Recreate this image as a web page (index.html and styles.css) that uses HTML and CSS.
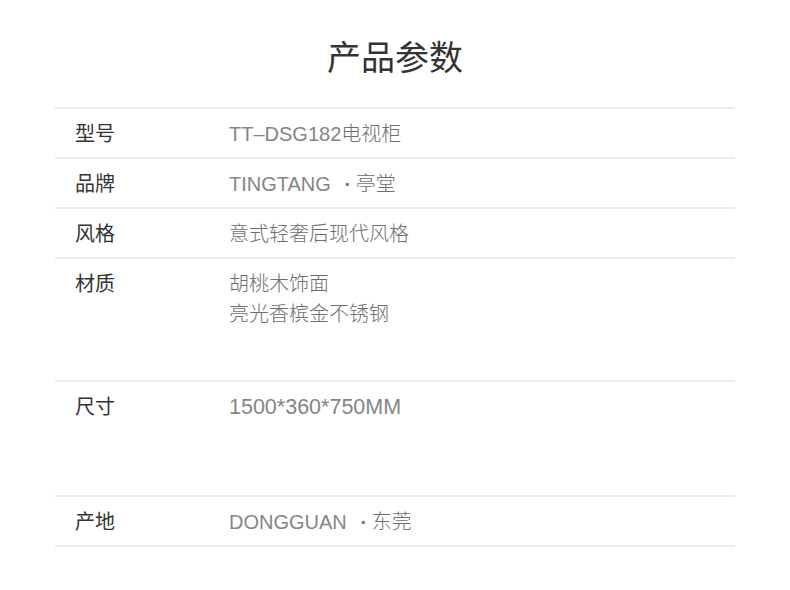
FILE: index.html
```html
<!DOCTYPE html>
<html lang="zh">
<head>
<meta charset="utf-8">
<title>产品参数</title>
<link rel="stylesheet" href="styles.css">
</head>
<body>
<div class="page">
  <h1 class="title">产品参数</h1>
  <div class="table">
    <div class="row">
      <div class="label">型号</div>
      <div class="value"><span class="en">TT–DSG182</span>电视柜</div>
    </div>
    <div class="row">
      <div class="label">品牌</div>
      <div class="value"><span class="en">TINGTANG</span><span class="dot">·</span>亭堂</div>
    </div>
    <div class="row">
      <div class="label">风格</div>
      <div class="value">意式轻奢后现代风格</div>
    </div>
    <div class="row row-material">
      <div class="label">材质</div>
      <div class="value">胡桃木饰面<br>亮光香槟金不锈钢</div>
    </div>
    <div class="row row-size">
      <div class="label">尺寸</div>
      <div class="value"><span class="en en-num">1500*360*750MM</span></div>
    </div>
    <div class="row row-last">
      <div class="label">产地</div>
      <div class="value"><span class="en">DONGGUAN</span><span class="dot">·</span>东莞</div>
    </div>
  </div>
</div>
</body>
</html>
```
FILE: styles.css
```css
html, body {
  margin: 0;
  padding: 0;
  background: #ffffff;
}
body {
  font-family: "Noto Sans CJK SC", "Noto Sans", sans-serif;
  color: #333333;
}
.page {
  width: 790px;
  height: 590px;
  box-sizing: border-box;
  padding: 0 55px;
}
.title {
  margin: 0;
  padding-top: 33px;
  height: 107px;
  box-sizing: border-box;
  text-align: center;
  font-size: 34px;
  line-height: 46px;
  font-weight: 400;
  color: #333333;
}
.table {
  display: flex;
  flex-direction: column;
}
.row {
  display: flex;
  border-top: 2px solid #ececec;
  height: 50px;
  box-sizing: border-box;
  padding-top: 9px;
  font-size: 20px;
  line-height: 30px;
}
.row-material {
  height: 123px;
}
.row-size {
  height: 115px;
}
.row-last {
  border-bottom: 2px solid #ececec;
  height: 52px;
}
.label {
  width: 174px;
  padding-left: 20px;
  box-sizing: border-box;
  color: #333333;
  font-weight: 400;
  flex-shrink: 0;
}
.value {
  color: #6e6e6e;
  font-weight: 300;
}
.en {
  font-family: "Liberation Sans", "Noto Sans CJK SC", sans-serif;
  font-size: 20px;
  color: #858585;
}
.en-num {
  font-size: 21.5px;
}
.dot {
  display: inline-block;
  width: 10px;
  margin: 0 3px 0 12px;
  text-align: center;
  font-family: "Liberation Sans", sans-serif;
  font-weight: 700;
  color: #777777;
}
```
